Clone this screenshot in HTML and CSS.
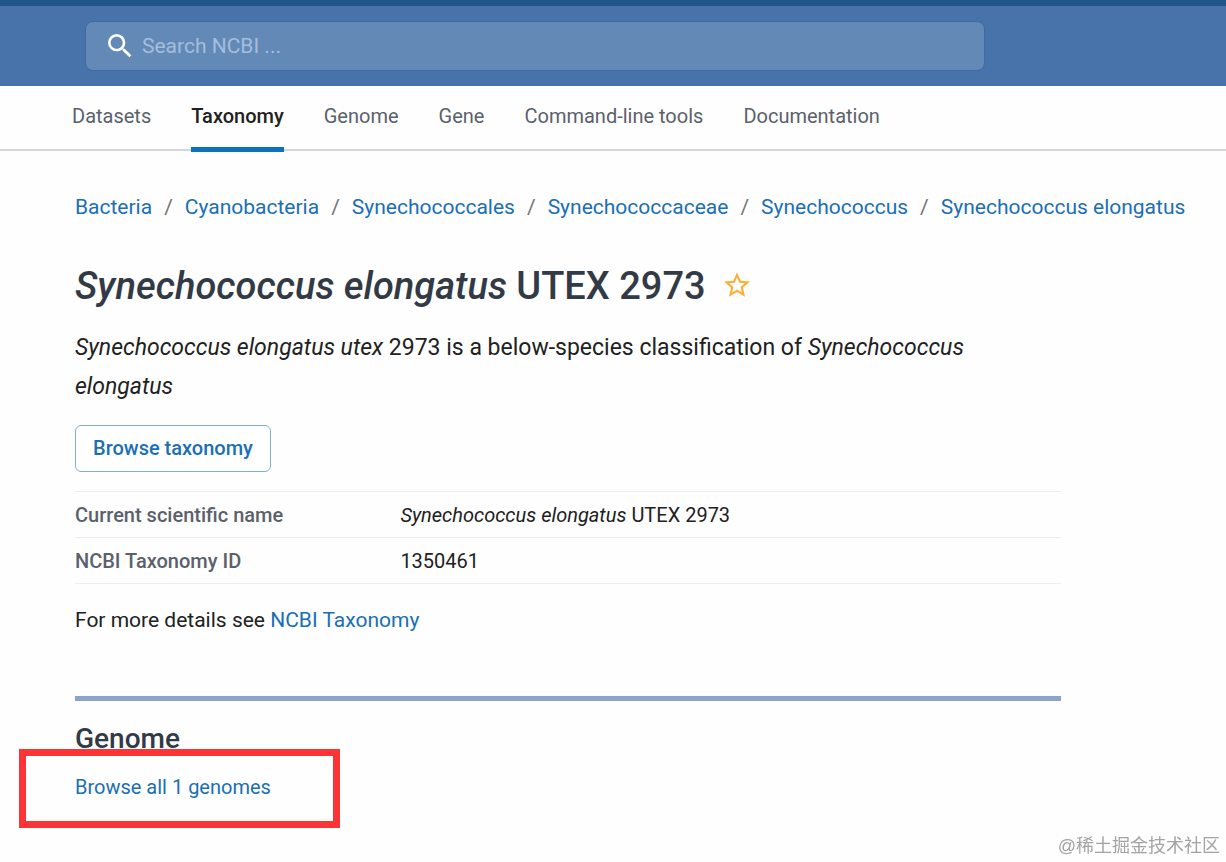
FILE: index.html
```
<!DOCTYPE html>
<html lang="en">
<head>
  <meta charset="UTF-8">
  <meta name="viewport" content="width=device-width, initial-scale=1.0">
  <title>Synechococcus elongatus UTEX 2973 - Taxonomy - NCBI</title>
  <link rel="stylesheet" href="styles.css">
</head>
<body>
  <header class="site-header">
    <form class="search" role="search">
      <label for="search" aria-label="Search NCBI">
        <svg class="search-icon" viewBox="3 3 18 18" aria-hidden="true">
          <path d="M15.5 14h-.79l-.28-.27A6.471 6.471 0 0 0 16 9.500 6.500 6.500 0 1 0 9.500 16c1.610 0 3.090-.59 4.230-1.570l.27.28v.79l5 4.990L20.490 19l-4.990-5zm-6 0C7.010 14 5 11.990 5 9.500S7.010 5 9.500 5 14 7.010 14 9.500 11.990 14 9.500 14z"/>
        </svg>
      </label>
      <input type="text" id="search" placeholder="Search NCBI ...">
    </form>
  </header>

  <nav class="main-nav">
    <a href="#">Datasets</a>
    <a href="#" class="active">Taxonomy</a>
    <a href="#">Genome</a>
    <a href="#">Gene</a>
    <a href="#">Command-line tools</a>
    <a href="#">Documentation</a>
  </nav>

  <main>
    <nav class="breadcrumbs">
      <a href="#">Bacteria</a><span>/</span>
      <a href="#">Cyanobacteria</a><span>/</span>
      <a href="#">Synechococcales</a><span>/</span>
      <a href="#">Synechococcaceae</a><span>/</span>
      <a href="#">Synechococcus</a><span>/</span>
      <a href="#">Synechococcus elongatus</a>
    </nav>

    <div class="content">
      <div class="title">
        <h1><em>Synechococcus elongatus</em> UTEX 2973</h1>
        <button class="star" aria-label="Add to favorites">
          <svg viewBox="2 2 20 19" aria-hidden="true">
            <path d="M22 9.240l-7.190-.62L12 2 9.190 8.630 2 9.240l5.460 4.730L5.820 21 12 17.270 18.180 21l-1.630-7.030L22 9.240zM12 15.400l-3.760 2.270 1-4.280-3.320-2.880 4.380-.38L12 6.100l1.710 4.040 4.380.38-3.320 2.880 1 4.280L12 15.400z"/>
          </svg>
        </button>
      </div>

      <p class="description"><em>Synechococcus elongatus utex</em> 2973 is a below-species classification of <em>Synechococcus elongatus</em></p>

      <button class="browse">Browse taxonomy</button>

      <table class="details">
        <tr>
          <th scope="row">Current scientific name</th>
          <td><em>Synechococcus elongatus</em> UTEX 2973</td>
        </tr>
        <tr>
          <th scope="row">NCBI Taxonomy ID</th>
          <td>1350461</td>
        </tr>
      </table>

      <p class="more">For more details see <a href="#">NCBI Taxonomy</a></p>

      <section class="genome">
        <h2>Genome</h2>
        <div class="genome-link">
          <a href="#">Browse all 1 genomes</a>
          <div class="highlight"></div>
        </div>
      </section>
    </div>
  </main>

  <div class="watermark" lang="zh">@稀土掘金技术社区</div>
</body>
</html>
```
FILE: styles.css
```
* {
  box-sizing: border-box;
}
body {
  font-family: Roboto, sans-serif;
  font-size: 20px;
  line-height: 24px;
  color: #212121;
  background: #fefefe;
  margin: 0;
  min-height: 100vh;
}
a {
  color: #1a6fb5;
  text-decoration: none;
}

/* Header */
.site-header {
  background: #4773aa;
  border-top: 6px solid #20558a;
  padding: 15px 20px 15px 85px;
}
.search {
  display: flex;
  align-items: center;
  gap: 10px;
  max-width: 900px;
  height: 50px;
  padding: 0 22px;
  background: #6389b7;
  border: 1px solid #3f6b9e;
  border-radius: 8px;
}
.search label {
  display: flex;
}
.search-icon {
  width: 24px;
  height: 24px;
  fill: #fff;
}
.search input {
  flex: 1;
  min-width: 0;
  font: inherit;
  font-size: 21px;
  color: #fff;
  background: none;
  border: none;
  outline: none;
  padding: 0;
}
.search input::placeholder {
  color: #a3bddd;
  opacity: 1;
}

/* Navigation */
.main-nav {
  display: flex;
  gap: 40px;
  padding: 0 72px;
  border-bottom: 2px solid #d6d7d9;
}
.main-nav a {
  color: #5b616b;
  padding: 18px 0 21px;
  white-space: nowrap;
}
.main-nav .active {
  color: #212121;
  font-weight: 500;
  padding-bottom: 19px;
  border-bottom: 5px solid #0b71b8;
  margin-bottom: -3px;
}

main {
  padding: 44px 20px 0 75px;
}
.breadcrumbs {
  display: flex;
  gap: 12px;
  font-size: 21px;
  white-space: nowrap;
}
.breadcrumbs span {
  color: #757575;
}

/* Taxon summary */
.content {
  max-width: 986px;
}
.title {
  display: flex;
  align-items: center;
  gap: 18px;
  margin-top: 43px;
}
h1 {
  font-size: 38px;
  font-weight: 500;
  line-height: 48px;
  color: #323a45;
  margin: 0;
}
.star {
  background: none;
  border: none;
  padding: 0 0 4px;
  cursor: pointer;
}
.star svg {
  display: block;
  width: 26px;
  height: 25px;
  fill: #fbb034;
}
.description {
  font-size: 23px;
  line-height: 39px;
  margin: 18px 0 19px;
}
.browse {
  display: block;
  font: 500 20px/24px Roboto, sans-serif;
  color: #1a6fb5;
  background: #fff;
  border: 1px solid #7fb0d4;
  border-radius: 6px;
  padding: 10px 17px 11px;
  cursor: pointer;
}
.details {
  width: 100%;
  margin-top: 19px;
  border-collapse: collapse;
  border-top: 1px solid #eee;
}
.details th,
.details td {
  text-align: left;
  padding: 11px 0 10px;
  border-bottom: 1px solid #eee;
}
.details th {
  width: 33%;
  font-weight: 500;
  color: #5b616b;
}
.more {
  font-size: 21px;
  margin: 24px 0 64px;
}

/* Genome */
.genome {
  border-top: 5px solid #8ea3cb;
  padding-top: 22px;
}
h2 {
  font-size: 28px;
  font-weight: 500;
  line-height: 32px;
  color: #323a45;
  margin: 0;
}
.genome-link {
  position: relative;
  margin-top: 20px;
}
.highlight {
  position: absolute;
  top: -26px;
  left: -56px;
  width: 321px;
  height: 79px;
  border: 7px solid #fb3537;
  pointer-events: none;
}

.watermark {
  position: fixed;
  right: 6px;
  bottom: 3px;
  font: 18px/26px "Liberation Sans", "Noto Sans CJK SC", sans-serif;
  color: #a3a3a3;
}
```
